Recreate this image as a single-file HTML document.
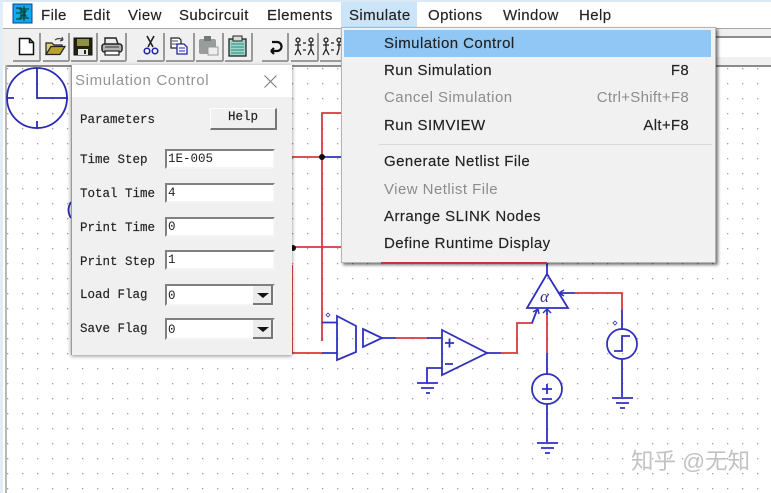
<!DOCTYPE html>
<html><head><meta charset="utf-8"><style>
html,body{margin:0;padding:0;background:#fff}
#r{position:relative;width:771px;height:493px;overflow:hidden;background:#fff;font-family:"Liberation Sans",sans-serif;filter:blur(.3px)}
.a{position:absolute}
.m{position:absolute;top:7px;font-size:15px;letter-spacing:.4px;color:#222;white-space:nowrap;line-height:18px;-webkit-text-stroke:.15px #222}
.i{position:absolute;left:42px;font-size:15px;letter-spacing:.45px;color:#222;white-space:nowrap;line-height:18px;-webkit-text-stroke:.15px #222}
.k{position:absolute;right:26px;font-size:15px;letter-spacing:.3px;color:#222;white-space:nowrap;line-height:18px;-webkit-text-stroke:.15px #222}
.g{color:#8c8c8c;-webkit-text-stroke:0}
.l{position:absolute;left:8px;font:12.5px/16px "Liberation Mono",monospace;color:#222;white-space:nowrap;-webkit-text-stroke:.15px #222}
.f{position:absolute;left:93px;width:105px;height:16px;background:#fff;border:2px solid;border-color:#808080 #f4f4f4 #f4f4f4 #808080;font:12.5px/17px "Liberation Mono",monospace;color:#222;padding-left:1px;box-sizing:content-box}
.b{position:absolute;left:181px;width:20px;height:19px;background:#ececec;border-right:2px solid #777;border-bottom:2px solid #777;box-sizing:border-box}
</style></head><body><div id="r">
<div class="a" style="left:0;top:0;width:771px;height:2px;background:#dbe9f6"></div>
<div class="a" style="left:0;top:2px;width:3px;height:491px;background:#e3edf6"></div>
<div class="a" style="left:3px;top:28px;width:768px;height:37px;background:#f0f0f0;border-top:1px solid #a8a8a8;box-sizing:border-box"></div>
<div class="a" style="left:5px;top:65px;width:766px;height:2px;background:#8a8a8a"></div>
<div class="a" style="left:5px;top:65px;width:2px;height:428px;background:#b8b8b8"></div>
<div class="a" style="left:716px;top:36px;width:55px;height:21px;background:#fff;border-top:2px solid #8c8c8c;box-sizing:border-box"></div>

<div class="a" style="left:341px;top:2px;width:76px;height:25px;background:#cce4f7"></div>
<div class="m" style="left:41px">File</div>
<div class="m" style="left:83px">Edit</div>
<div class="m" style="left:128px">View</div>
<div class="m" style="left:179px">Subcircuit</div>
<div class="m" style="left:267px">Elements</div>
<div class="m" style="left:349px">Simulate</div>
<div class="m" style="left:428px">Options</div>
<div class="m" style="left:503px">Window</div>
<div class="m" style="left:579px">Help</div>

<svg class="a" style="left:0;top:0" width="771" height="493" viewBox="0 0 771 493">
<defs><pattern id="d" x="7" y="68" width="15" height="15" patternUnits="userSpaceOnUse"><rect width="1.300" height="1.300" fill="#a0a0a0"/></pattern></defs>
<rect x="7" y="67" width="764" height="426" fill="url(#d)"/>
<!-- app icon -->
<rect x="13" y="4" width="19" height="19" fill="#10a8ee" stroke="#0a3f90"/>
<path d="M16 8h5v11h-5M21 13h-5M24 6v15M19 9h10M19 18h10M26 11h-4l2 3zM22 16h4l-2-3z" stroke="#0a4a3a" stroke-width="1.300" fill="none"/>
<!-- toolbar button shadows -->
<path d="M13 61h27M43 61h26M71 61h26M100 61h26M137 61h27M166 61h28M196 61h27M225 61h27M262 61h26M291 61h27M320 61h22M40 33v28M69 33v28M97 33v28M126 33v28M164 33v28M194 33v28M223 33v28M252 33v28M288 33v28M318 33v28" stroke="#9a9a9a" stroke-width="2" fill="none"/>
<!-- new -->
<path d="M19.500 38.500h10l4 4v12h-14zM29.500 38.500v4h4" fill="#fff" stroke="#111" stroke-width="1.500"/>
<!-- open -->
<path d="M46 54V43h6l2 2h8v3" fill="#e0d070" stroke="#222" stroke-width="1.200"/><path d="M46 54.500l5-8h14l-5 8z" fill="#b8a428" stroke="#222" stroke-width="1.200"/><path d="M55 40q4-3 8 0M63 40l-1-3M63 40l-3 1" stroke="#444" stroke-width="1.200" fill="none"/>
<!-- save -->
<rect x="74" y="38" width="18" height="17" fill="#22220f" stroke="#111"/><rect x="77" y="39" width="12" height="7" fill="#8f8f48"/><rect x="78" y="49" width="10" height="6" fill="#e6e6e6"/><rect x="84" y="50" width="2" height="4" fill="#222"/>
<!-- print -->
<path d="M105 44v-6h11l2 6" fill="#eee" stroke="#222" stroke-width="1.400"/><rect x="102" y="44" width="20" height="8" rx="2.500" fill="#b4b4b4" stroke="#222" stroke-width="1.500"/><rect x="105" y="51" width="14" height="4" fill="#fff" stroke="#222" stroke-width="1.200"/><path d="M105 47h14" stroke="#333"/>
<!-- cut -->
<path d="M147 36l6 11M154 36l-6 11" stroke="#222" stroke-width="1.600"/><circle cx="147" cy="51" r="2.800" fill="none" stroke="#22229a" stroke-width="1.500"/><circle cx="155" cy="51" r="2.800" fill="none" stroke="#22229a" stroke-width="1.500"/>
<!-- copy -->
<path d="M171 38h8l2 2v8h-10z" fill="#fff" stroke="#222" stroke-width="1.200"/><path d="M172 41h6M172 44h6" stroke="#446"/><path d="M177 44h7l3 3v7h-10z" fill="#fff" stroke="#22229a" stroke-width="1.300"/><path d="M179 48h6M179 51h6" stroke="#22229a"/>
<!-- paste disabled -->
<rect x="199" y="39" width="17" height="15" rx="2" fill="#989c9c"/><rect x="204" y="36" width="7" height="5" fill="#777"/><rect x="208" y="47" width="10" height="8" fill="#eee" stroke="#999"/>
<!-- clipboard -->
<rect x="229" y="39" width="17" height="17" fill="#9ed6c4" stroke="#222" stroke-width="1.300"/><rect x="233" y="36" width="9" height="5" fill="#ddd" stroke="#222"/><path d="M231 44h13M231 47h13M231 50h13M231 53h13" stroke="#2a8a8a"/>
<!-- undo -->
<path d="M272 42h5a4 4 0 0 1 0 9h-6M271 51l3-3M271 51l3 3" fill="none" stroke="#111" stroke-width="2.200"/>
<!-- people -->
<g fill="none" stroke="#222" stroke-width="1.300"><circle cx="298" cy="40" r="2"/><path d="M298 42v7M295 45h6M298 49l-3 6M298 49l3 6"/><circle cx="311" cy="40" r="2"/><path d="M311 42v7M308 45h6M311 49l-3 6M311 49l3 6"/><path d="M303 43h3M303 50h3"/><circle cx="326" cy="40" r="2"/><path d="M326 42v7M323 45h6M326 49l-3 6M326 49l3 6M331 43h3M331 50h3"/><circle cx="339" cy="40" r="2"/><path d="M339 42v7M337 45h4M339 49l-2 6"/></g>

<!-- clock -->
<g fill="none" stroke="#2a2ab4" stroke-width="1.800"><circle cx="37" cy="98" r="30"/><path d="M37 68v30h30M7 98h7M37 121v8M60 98h8"/><path d="M71 202q-5 8 0 16"/></g>
<!-- wires -->
<g fill="none" stroke-width="1.800">
<path d="M322 341V113h20M292 157h30M292 247h50M322 247v75M292 265v88h30M396 338h31M501 353h16v-30h15M547 353V315M575 293h47v17" stroke="#d8383f"/>
<path d="M322 157h20M322 322.500h15M322 353h15M382 338h14M427 338h15M487 353h14M547 263v11M622 310v20M547 353v21M547 315v-6M559 293h16M532 323l5-13" stroke="#3030c0"/>
<path d="M337 316l19 10v26l-19 8zM363 329l19 9-19 9zM442 330l45 23-45 22zM442 368h-15v15M417 383h21M421 388h13M426 393h4M527 308l20-34 21 34zM547 404v38M537 443h21M541 448h13M545 453h5M622 359v38M612 398h21M616 403h13M620 408h5" stroke="#3030c0"/>
<path d="M445 343h9M449.500 338.500v9M445 364h8M542 389h10M547 384v10M542 399h10M614 351h8v-15h8" stroke="#3030c0"/>
<circle cx="622" cy="344" r="15" stroke="#3030c0"/><circle cx="547" cy="389" r="15" stroke="#3030c0"/>
<path d="M559 293l5-3M559 293l5 3M547 309l-4 4M547 309l4 4M538 309l-5 3M538 309l1 5" stroke="#3030c0" stroke-width="1.500"/>
</g>
<text x="540" y="302" font-family="Liberation Serif,serif" font-style="italic" font-size="17" fill="#33338c">α</text>
<circle cx="322" cy="157" r="3" fill="#111"/>
<circle cx="293" cy="248" r="3" fill="#111"/>
<path d="M328 313l2 2-2 2-2-2z M615 321l2 2-2 2-2-2z" fill="none" stroke="#3333b8" stroke-width=".8"/>
</svg>

<!-- dialog -->
<div class="a" style="left:71px;top:65px;width:221px;height:290px;background:#f0f0f0;box-shadow:0 1px 4px rgba(0,0,0,.45);border-left:1px solid #999;box-sizing:border-box">
<div class="a" style="left:0;top:0;width:220px;height:32px;background:#fff"></div>
<div class="a" style="left:3px;top:7px;font-size:15px;letter-spacing:.65px;color:#949494;line-height:18px;white-space:nowrap">Simulation Control</div>
<svg class="a" style="left:191px;top:9px" width="16" height="16"><path d="M1.500 1.500l12 12M13.500 1.500l-12 12" stroke="#777" fill="none"/></svg>
<div class="l" style="top:47px">Parameters</div>
<div class="a" style="left:138px;top:43px;width:67px;height:22px;background:#f0f0f0;border-top:1px solid #fff;border-left:1px solid #fff;border-right:2px solid #777;border-bottom:2px solid #777;box-sizing:border-box;font:12.5px/17px 'Liberation Mono',monospace;color:#222;text-align:center;-webkit-text-stroke:.15px #222">Help</div>
<div class="l" style="top:87px">Time Step</div><div class="f" style="top:84px">1E-005</div>
<div class="l" style="top:121px">Total Time</div><div class="f" style="top:118px">4</div>
<div class="l" style="top:155px">Print Time</div><div class="f" style="top:152px">0</div>
<div class="l" style="top:189px">Print Step</div><div class="f" style="top:185px">1</div>
<div class="l" style="top:222px">Load Flag</div><div class="f" style="top:219px;height:18px;line-height:20px">0</div><div class="b" style="top:221px"></div>
<div class="l" style="top:256px">Save Flag</div><div class="f" style="top:253px;height:18px;line-height:20px">0</div><div class="b" style="top:255px"></div>
<svg class="a" style="left:181px;top:221px" width="20" height="68"><path d="M4 7h12l-6 5zM4 41h12l-6 5z" fill="#111"/></svg>
</div>

<!-- menu -->
<div class="a" style="left:341px;top:27px;width:375px;height:236px;background:#f1f1f1;border:1px solid #b5b5b5;box-sizing:border-box;box-shadow:2px 2px 3px rgba(0,0,0,.55)">
<div class="a" style="left:2px;top:2px;width:367px;height:27px;background:#90c7f4"></div>
<div class="a" style="left:37px;top:116px;width:333px;height:1px;background:#d8d8d8"></div>
<div class="i" style="top:7px">Simulation Control</div>
<div class="i" style="top:34px">Run Simulation</div><div class="k" style="top:34px">F8</div>
<div class="i g" style="top:61px">Cancel Simulation</div><div class="k g" style="top:61px">Ctrl+Shift+F8</div>
<div class="i" style="top:89px">Run SIMVIEW</div><div class="k" style="top:89px">Alt+F8</div>
<div class="i" style="top:125px">Generate Netlist File</div>
<div class="i g" style="top:153px">View Netlist File</div>
<div class="i" style="top:180px">Arrange SLINK Nodes</div>
<div class="i" style="top:207px">Define Runtime Display</div>
</div>
<svg class="a" style="left:0;top:0" width="771" height="493"><path d="M381 263h166" stroke="#c8323c" stroke-width="2" fill="none"/></svg>

<div class="a" style="left:631px;top:448px;font:22.5px/28px 'Liberation Sans','Noto Sans CJK SC',sans-serif;color:#c2c2c2;white-space:nowrap">知乎 @无知</div>
</div></body></html>
